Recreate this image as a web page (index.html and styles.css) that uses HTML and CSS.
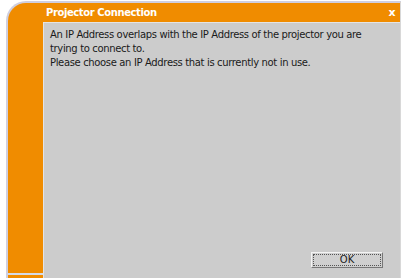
FILE: index.html
```html
<!DOCTYPE html>
<html>
<head>
<meta charset="utf-8">
<link rel="stylesheet" href="styles.css">
</head>
<body>
<div class="window">
  <div class="titlebar">
    <span class="title">Projector Connection</span>
    <span class="close">x</span>
  </div>
  <div class="main">
    <div class="sidebar"></div>
    <div class="content">
      <p class="message">An IP Address overlaps with the IP Address of the projector you are trying to connect to.<br>Please choose an IP Address that is currently not in use.</p>
      <div class="actions">
        <button class="ok"><span class="focus">OK</span></button>
      </div>
    </div>
  </div>
</div>
</body>
</html>
```
FILE: styles.css
```css
html, body {
  margin: 0;
  padding: 0;
  background: #ffffff;
  width: 403px;
  height: 278px;
  overflow: hidden;
}
body {
  font-family: "DejaVu Sans", Verdana, sans-serif;
  font-size: 10px;
}
.window {
  margin: 1px 0 0 6px;
  width: 392px;
  height: 275px;
  border-top: 2px solid #cfcfe0;
  border-left: 2px solid #cfcfe0;
  border-right: 1px solid #d8d8d8;
  border-top-left-radius: 20px;
  background: #f08c00;
  display: flex;
  flex-direction: column;
  overflow: hidden;
}
.titlebar {
  height: 19px;
  flex: none;
  display: flex;
  align-items: center;
  padding-left: 38px;
  padding-right: 4px;
}
.title {
  color: #ffffff;
  font-weight: bold;
  font-size: 10px;
  letter-spacing: -0.4px;
  flex: 1;
}
.close {
  color: #ffffff;
  font-weight: bold;
  font-size: 11px;
  line-height: 10px;
  width: 8px;
  text-align: center;
}
.main {
  flex: 1;
  display: flex;
  min-height: 0;
}
.sidebar {
  width: 35px;
  height: 251px;
  flex: none;
  background: #f08c00;
  border-bottom: 2px solid #d4dbe8;
}
.content {
  flex: 1;
  background: #cccccc;
  border-top: 1px solid #e4e4e4;
  border-left: 1px solid #e4e4e4;
  display: flex;
  flex-direction: column;
  padding: 5px 0 10px 6px;
}
.message {
  margin: 0;
  color: #1a1a1a;
  line-height: 14px;
  letter-spacing: -0.35px;
  width: 330px;
}
.actions {
  margin-top: auto;
  display: flex;
  justify-content: flex-end;
  padding-right: 17px;
}
.ok {
  width: 72px;
  height: 16px;
  padding: 1px;
  margin: 0;
  background: #d0d0d0;
  border: 1px solid;
  border-color: #f4f4f4 #777777 #777777 #f4f4f4;
  font-family: "DejaVu Sans", Verdana, sans-serif;
  font-size: 10px;
  color: #222222;
  display: flex;
}
.focus {
  flex: 1;
  border: 1px dotted #555555;
  line-height: 10px;
  text-align: center;
}
```
